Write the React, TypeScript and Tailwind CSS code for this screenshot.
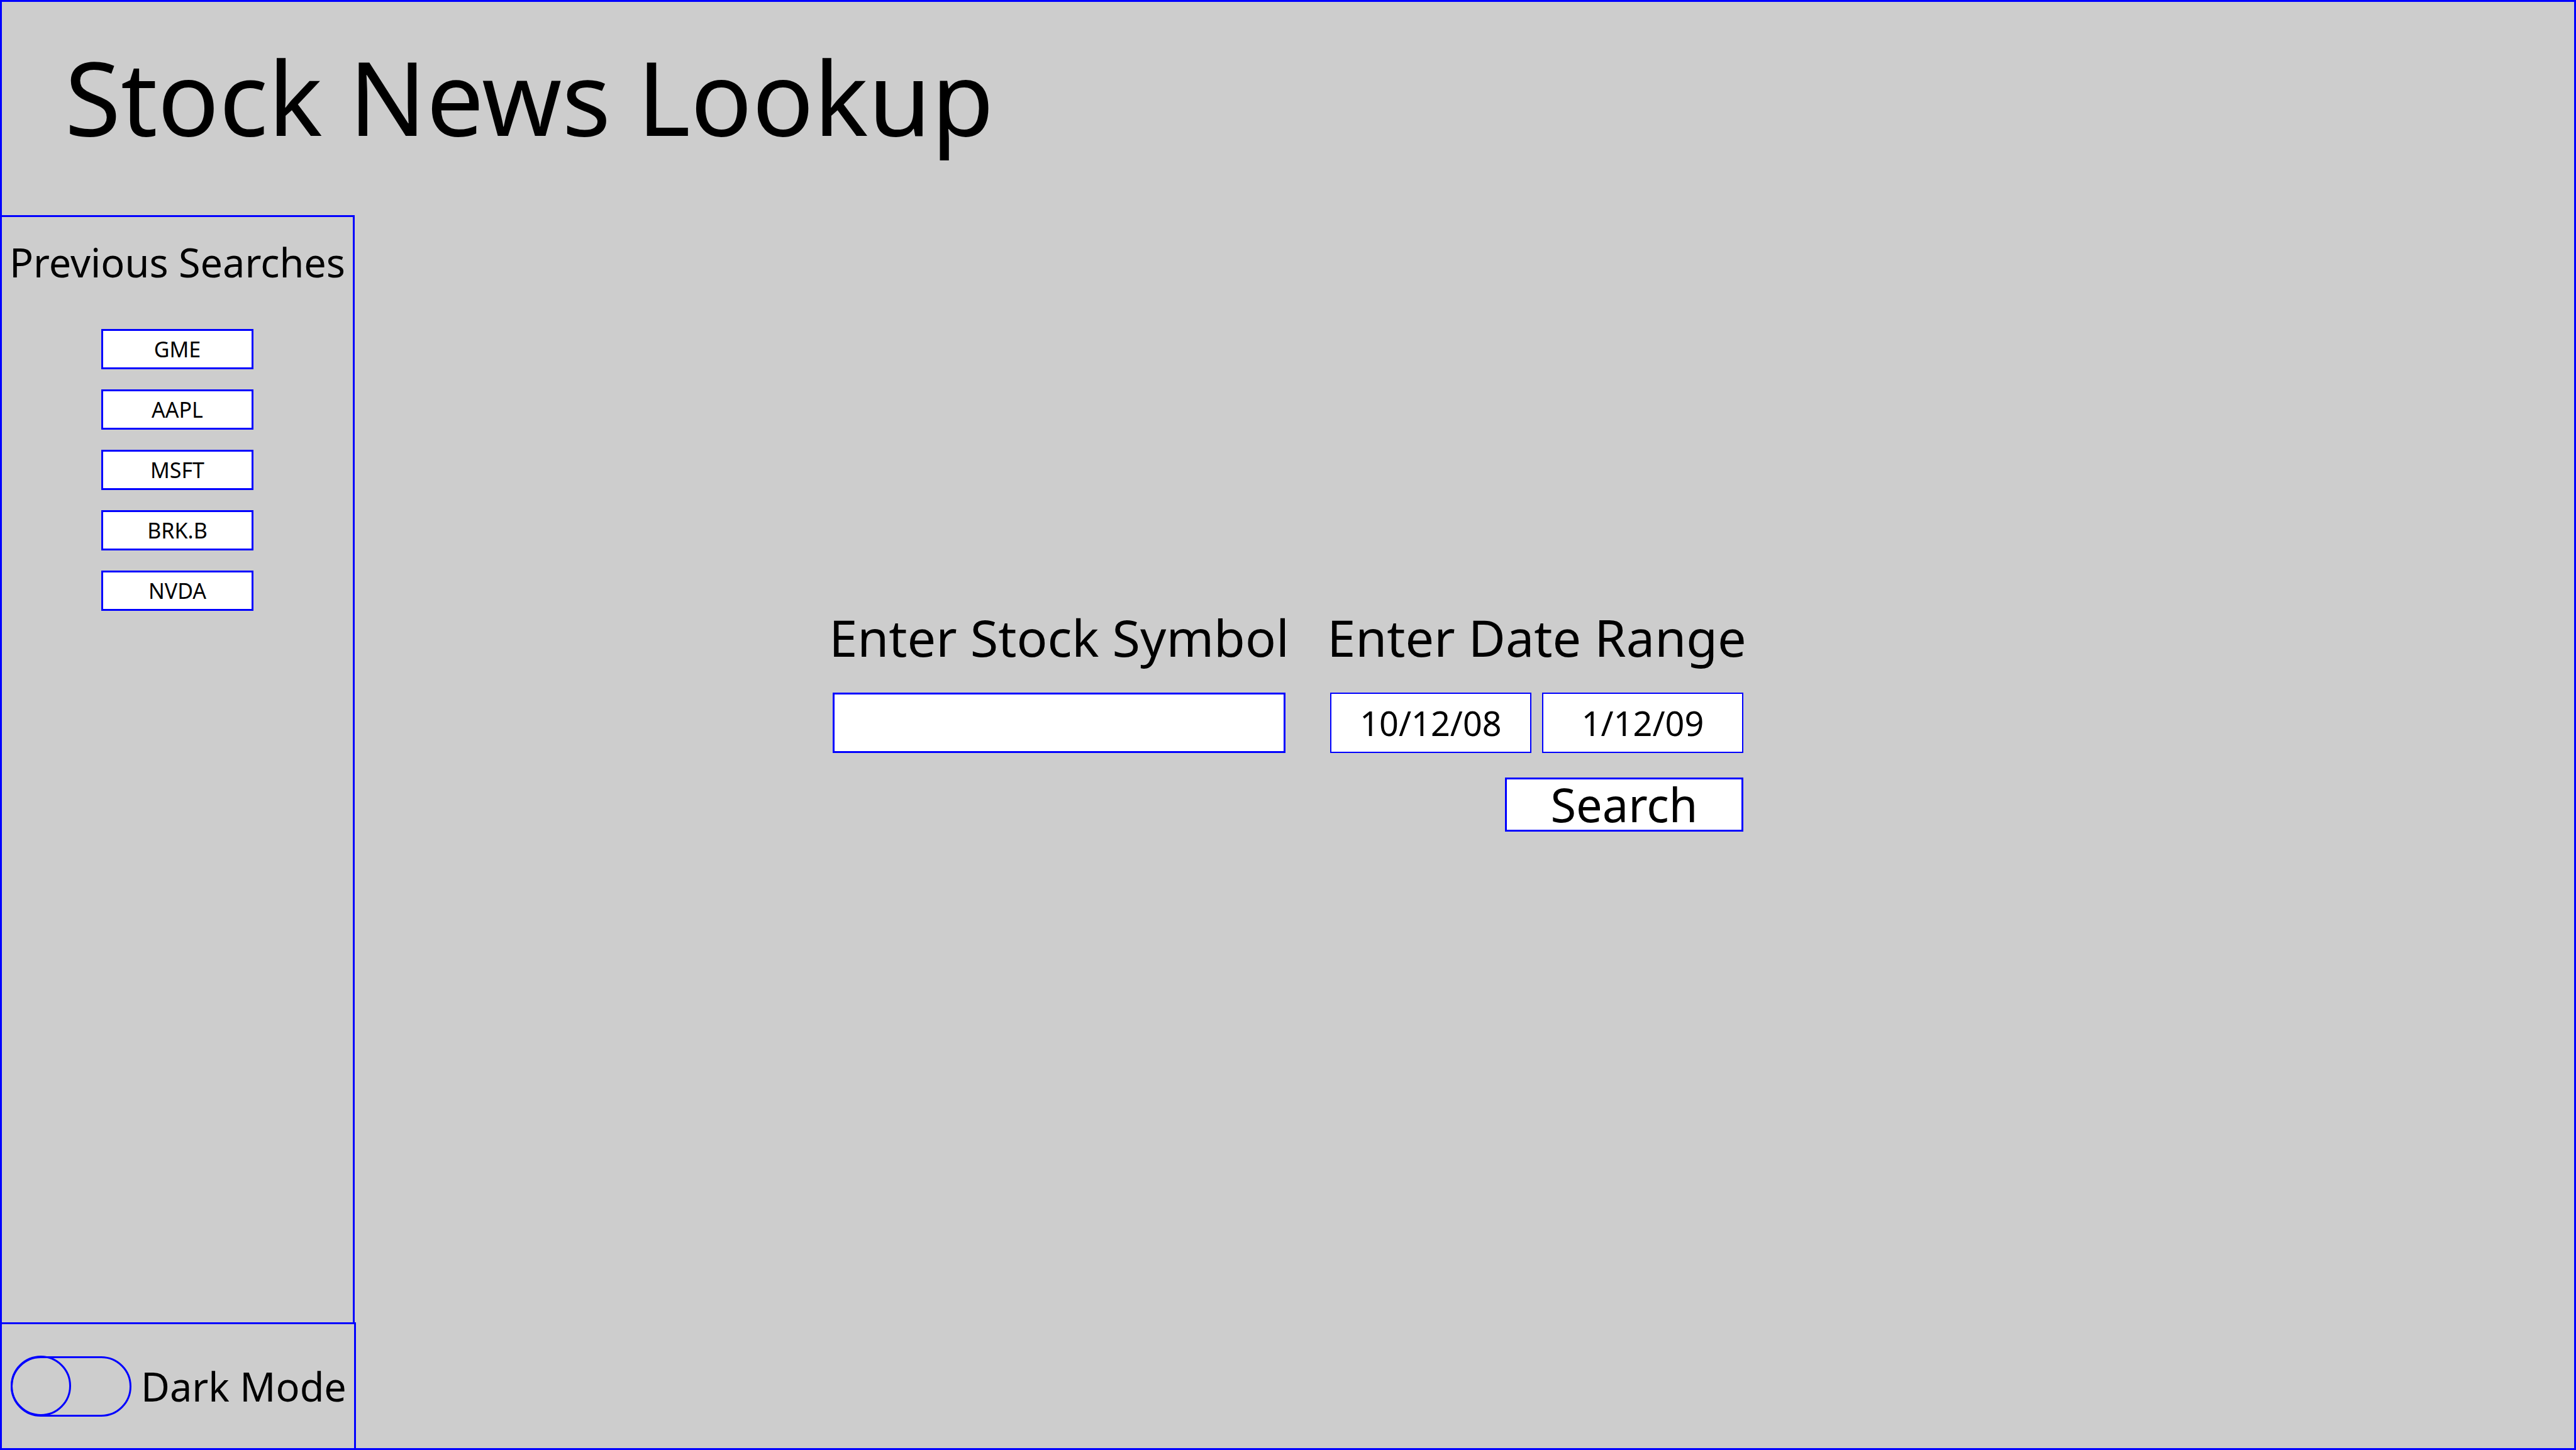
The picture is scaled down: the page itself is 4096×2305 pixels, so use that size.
import { useState } from "react";

const previousSearches = ["GME", "AAPL", "MSFT", "BRK.B", "NVDA"];

function Header() {
  return (
    <header className="pt-10 pb-[79px] pl-[100px]">
      <h1 className="text-[162px] leading-[220px] whitespace-nowrap">Stock News Lookup</h1>
    </header>
  );
}

function PreviousSearches({ onPick }: { onPick: (symbol: string) => void }) {
  return (
    <nav
      aria-labelledby="previous-searches"
      className="flex w-[561px] flex-1 flex-col items-center border-t-3 border-r-3 border-[#0000ff] pt-6"
    >
      <h2 id="previous-searches" className="text-[63px] leading-24 whitespace-nowrap">
        Previous Searches
      </h2>
      <ul className="mt-[58px] flex flex-col gap-8">
        {previousSearches.map((symbol) => (
          <li key={symbol} className="flex">
            <button
              type="button"
              onClick={() => onPick(symbol)}
              className="h-16 w-[242px] border-3 border-[#0000ff] bg-white text-center text-[34px] leading-none"
            >
              {symbol}
            </button>
          </li>
        ))}
      </ul>
    </nav>
  );
}

function DarkModeToggle() {
  return (
    <div className="flex h-[200px] w-[563px] items-center gap-[15px] border-t-3 border-r-3 border-[#0000ff] pl-[14px]">
      <input
        id="dark-mode"
        type="checkbox"
        role="switch"
        className="relative h-24 w-48 shrink-0 appearance-none rounded-full border-3 border-[#0000ff] before:absolute before:-top-1 before:-left-[3px] before:size-24 before:rounded-full before:border-3 before:border-[#0000ff] before:content-[''] checked:before:left-[93px]"
      />
      <label htmlFor="dark-mode" className="text-[63px] leading-24 whitespace-nowrap">
        Dark Mode
      </label>
    </div>
  );
}

function SearchForm({ symbol, onSymbol }: { symbol: string; onSymbol: (value: string) => void }) {
  return (
    <form
      className="flex items-start justify-center gap-[71px] pt-[615px]"
      onSubmit={(event) => event.preventDefault()}
    >
      <div className="flex w-[720px] flex-col items-center gap-8">
        <label htmlFor="symbol" className="text-[81px] leading-28 whitespace-nowrap">
          Enter Stock Symbol
        </label>
        <input
          id="symbol"
          type="text"
          value={symbol}
          onChange={(event) => onSymbol(event.target.value)}
          className="h-24 w-full border-3 border-[#0000ff] bg-white px-6 text-[54px]"
        />
      </div>
      <div role="group" aria-labelledby="date-range" className="flex w-[657px] flex-col items-center">
        <span id="date-range" className="text-[81px] leading-28 whitespace-nowrap">
          Enter Date Range
        </span>
        <div className="mt-8 flex w-full gap-[17px]">
          <input
            type="text"
            aria-label="Start date"
            defaultValue="10/12/08"
            className="h-24 w-full min-w-0 border-2 border-[#0000ff] bg-white text-center text-[54px]"
          />
          <input
            type="text"
            aria-label="End date"
            defaultValue="1/12/09"
            className="h-24 w-full min-w-0 border-2 border-[#0000ff] bg-white text-center text-[54px]"
          />
        </div>
        <button
          type="submit"
          className="mt-[39px] h-[86px] w-[379px] self-end border-3 border-[#0000ff] bg-white text-center text-[74px] leading-none"
        >
          Search
        </button>
      </div>
    </form>
  );
}

export default function App() {
  const [symbol, setSymbol] = useState("");
  return (
    <div className="flex min-h-screen flex-col border-3 border-[#0000ff] bg-[#cdcdcd] font-['Noto_Sans',sans-serif] text-black">
      <Header />
      <div className="grid flex-1 grid-cols-[563px_1fr_563px]">
        <aside className="flex flex-col">
          <PreviousSearches onPick={setSymbol} />
          <DarkModeToggle />
        </aside>
        <main>
          <SearchForm symbol={symbol} onSymbol={setSymbol} />
        </main>
      </div>
    </div>
  );
}
